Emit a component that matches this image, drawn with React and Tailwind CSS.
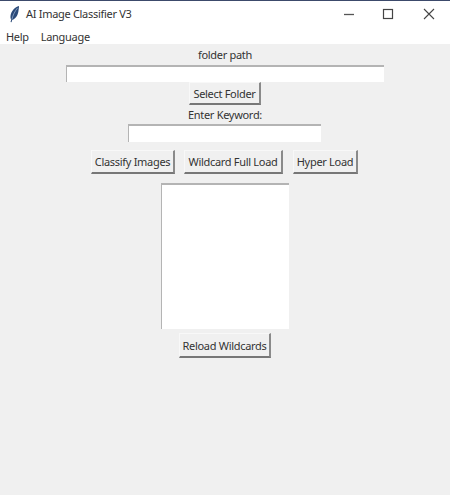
import React from "react";

const font = "font-['Noto_Sans','Open_Sans',sans-serif] text-[11px] tracking-[-0.3px] leading-none text-[#333333] whitespace-nowrap";

function TkButton({ children, className = "" }) {
  return (
    <button className={`border-t border-l border-t-[#f8f8f8] border-l-[#f8f8f8] border-r-2 border-b-2 border-r-[#8a8a8a] border-b-[#777777] bg-[#f0f0f0] flex items-center justify-center ${className}`}>
      {children}
    </button>
  );
}

function Entry({ className = "" }) {
  return <div className={`bg-white border-t-2 border-l border-t-[#b4b4b4] border-l-[#b4b4b4] ${className}`} />;
}

export default function App() {
  return (
    <div className={`w-[450px] h-[495px] flex flex-col bg-[#f0f0f0] overflow-hidden ${font}`}>
      <div className="h-[28px] shrink-0 bg-white border-t border-t-[#3c4a6b] pb-[2px] flex items-center">
        <svg className="ml-[8px] w-[12px] h-[18px]" viewBox="0 0 12 18">
          <path d="M11 1C7 2 3 6 2.500 11c-.2 2 .2 3 .8 3.500L2.500 17l1 .3.8-2.600c3-.5 5.300-4 6-7.700.4-2.500.7-4.700.7-6z" fill="#2b4a78" />
          <path d="M9.500 3C7 6 5 10 4 14" stroke="#9db4d6" strokeWidth="0.7" fill="none" />
        </svg>
        <span className="ml-[6px]">AI Image Classifier V3</span>
        <div className="ml-auto flex items-center">
          <svg className="w-[12px] h-[12px] mr-[27px]" viewBox="0 0 12 12"><path d="M1 6.500h10" stroke="#555" strokeWidth="1.300" /></svg>
          <svg className="w-[12px] h-[12px] mr-[29px]" viewBox="0 0 12 12"><rect x="1.500" y="1.500" width="9" height="9" fill="none" stroke="#444" strokeWidth="1.200" /></svg>
          <svg className="w-[12px] h-[12px] mr-[15px]" viewBox="0 0 12 12"><path d="M1 1l10 10M11 1L1 11" stroke="#444" strokeWidth="1.100" /></svg>
        </div>
      </div>
      <div className="h-[16px] shrink-0 bg-white flex items-center pl-[6px] gap-[12px]">
        <span>Help</span>
        <span>Language</span>
      </div>
      <div className="flex-1 flex flex-col items-center">
        <div className="h-[21px] flex items-center">folder path</div>
        <Entry className="w-[318px] h-[17px]" />
        <TkButton className="w-[72px] h-[23px]">Select Folder</TkButton>
        <div className="h-[19px] flex items-center pb-[1px]">Enter Keyword:</div>
        <Entry className="w-[193px] h-[18px] mr-[1px]" />
        <div className="flex mt-[8px] mr-[1px]">
          <TkButton className="w-[84px] h-[24px]">Classify Images</TkButton>
          <TkButton className="w-[99px] h-[24px] ml-[9px]">Wildcard Full Load</TkButton>
          <TkButton className="w-[65px] h-[24px] ml-[10px]">Hyper Load</TkButton>
        </div>
        <Entry className="w-[128px] h-[146px] mt-[9px]" />
        <TkButton className="w-[92px] h-[25px] mt-[4px]">Reload Wildcards</TkButton>
      </div>
    </div>
  );
}
